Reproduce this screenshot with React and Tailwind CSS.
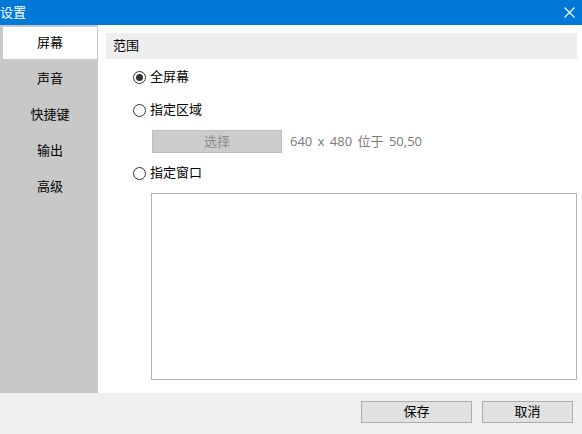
import { useState } from "react";

const TABS = ["屏幕", "声音", "快捷键", "输出", "高级"];

function Radio({ checked, label, onClick }) {
  return (
    <button onClick={onClick} className="flex items-center h-[20px] pl-[27px] text-left">
      <span className="w-[13px] h-[13px] rounded-full border border-[#333] bg-white flex items-center justify-center">
        {checked && <span className="w-[7px] h-[7px] rounded-full bg-[#333]" />}
      </span>
      <span className="ml-[4px] text-[13px] text-black">{label}</span>
    </button>
  );
}

export default function App() {
  const [tab, setTab] = useState(0);
  const [mode, setMode] = useState("full");
  const font = { fontFamily: '"Open Sans", "Noto Sans CJK SC", sans-serif' };

  return (
    <div className="w-[582px] h-[434px] flex flex-col overflow-hidden bg-white" style={font}>
      {/* title bar */}
      <div className="h-[25px] bg-[#0078d7] flex items-center justify-between text-white text-[13px] flex-shrink-0">
        <span className="leading-none">设置</span>
        <svg width="11" height="11" viewBox="0 0 11 11" className="mr-[7px]">
          <path d="M0.5 0.5 L10.5 10.5 M10.5 0.5 L0.5 10.5" stroke="#fff" strokeWidth="1.2" />
        </svg>
      </div>

      <div className="flex flex-1 min-h-0">
        {/* sidebar */}
        <div className="w-[98px] bg-[#c8c8c8] flex flex-col flex-shrink-0">
          {TABS.map((t, i) => (
            <button key={t} onClick={() => setTab(i)} className="h-[36px] pt-[2px] pb-[2px] pl-[3px] pr-[1px]">
              <span className={"h-full flex items-center justify-center text-[13px] text-black " + (tab === i ? "bg-white" : "")}>{t}</span>
            </button>
          ))}
        </div>

        {/* content */}
        <div className="flex-1 pl-[8px] pr-[5px] pt-[8px] flex flex-col">
          <div className="h-[26px] bg-[#eeeeee] pl-[7px] flex items-center text-[13px] text-black">范围</div>
          <div className="mt-[8px]">
            <Radio checked={mode === "full"} label="全屏幕" onClick={() => setMode("full")} />
          </div>
          <div className="mt-[13px]">
            <Radio checked={mode === "area"} label="指定区域" onClick={() => setMode("area")} />
          </div>
          <div className="mt-[10px] pl-[46px] flex items-center">
            <button className="w-[130px] h-[23px] bg-[#cccccc] border border-[#bfbfbf] text-[13px] text-[#8c8c8c]">选择</button>
            <span className="ml-[8px] text-[13px] text-[#7a7a7a] [word-spacing:2px]">640 x 480 位于 50,50</span>
          </div>
          <div className="mt-[10px]">
            <Radio checked={mode === "window"} label="指定窗口" onClick={() => setMode("window")} />
          </div>
          <div className="mt-[10px] ml-[45px] h-[187px] border border-[#b4b4b4] bg-white" />
        </div>
      </div>

      {/* footer */}
      <div className="h-[41px] bg-[#efefef] flex justify-end items-start pt-[8px] pr-[9px] gap-[10px] flex-shrink-0">
        <button className="w-[111px] h-[22px] bg-[#e1e1e1] border border-[#adadad] text-[13px] text-black">保存</button>
        <button className="w-[91px] h-[22px] bg-[#e1e1e1] border border-[#adadad] text-[13px] text-black">取消</button>
      </div>
    </div>
  );
}
